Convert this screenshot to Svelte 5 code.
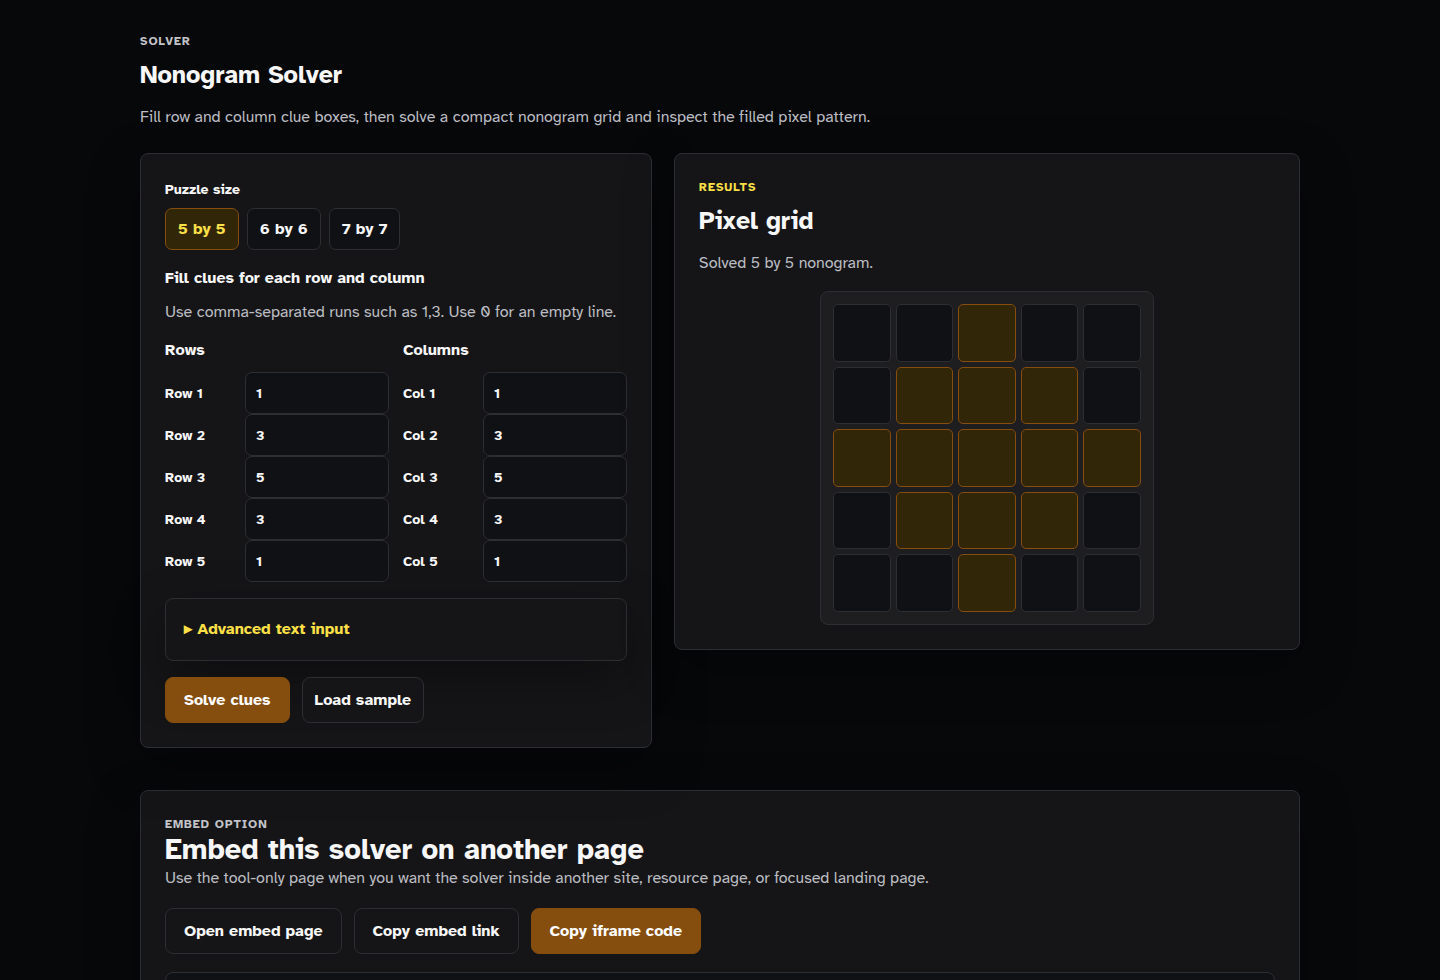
<script>
  const sizes = [5, 6, 7];
  const samples = {
    5: ["1", "3", "5", "3", "1"],
    6: ["2", "4", "6", "6", "4", "2"],
    7: ["1", "3", "5", "7", "5", "3", "1"],
  };
  const embedUrl = "/embed/nonogram-solver";
  const iframeCode = `<iframe src="${embedUrl}" title="Nonogram Solver" width="100%" height="720"></iframe>`;

  let size = 5;
  let rows = [...samples[5]];
  let cols = [...samples[5]];
  let grid = [];
  let message = "";

  function parseClue(text) {
    return text
      .split(",")
      .map((part) => parseInt(part, 10))
      .filter((n) => n > 0);
  }

  function runsOf(line) {
    return line
      .join("")
      .split("0")
      .filter(Boolean)
      .map((run) => run.length)
      .join(",");
  }

  function linesFor(clue) {
    const lines = [];
    for (let mask = 0; mask < 2 ** size; mask++) {
      const line = Array.from({ length: size }, (_, i) => (mask >> i) & 1);
      if (runsOf(line) === clue) lines.push(line);
    }
    return lines;
  }

  function search(options, colLines, picked) {
    const y = picked.length;
    if (y === size) return picked;
    for (const line of options[y]) {
      const left = colLines.map((col, x) => col.filter((c) => c[y] === line[x]));
      if (left.some((col) => col.length === 0)) continue;
      const found = search(options, left, [...picked, line]);
      if (found) return found;
    }
    return null;
  }

  function solve() {
    const rowLines = rows.map((r) => linesFor(parseClue(r).join(",")));
    const colLines = cols.map((c) => linesFor(parseClue(c).join(",")));
    const found = search(rowLines, colLines, []);
    grid = found || Array.from({ length: size }, () => Array(size).fill(0));
    message = found
      ? `Solved ${size} by ${size} nonogram.`
      : "No solution matches these clues.";
  }

  function loadSample() {
    rows = [...samples[size]];
    cols = [...samples[size]];
    solve();
  }

  function setSize(n) {
    size = n;
    loadSample();
  }

  function copy(text) {
    navigator.clipboard?.writeText(text);
  }

  solve();
</script>

<main>
  <header>
    <p class="eyebrow">Solver</p>
    <h1>Nonogram Solver</h1>
    <p class="muted">
      Fill row and column clue boxes, then solve a compact nonogram grid and inspect the filled pixel pattern.
    </p>
  </header>

  <div class="workspace">
    <section class="card">
      <h2 class="label" id="size-label">Puzzle size</h2>
      <div class="sizes" role="group" aria-labelledby="size-label">
        {#each sizes as n}
          <button class="size" class:active={n === size} on:click={() => setSize(n)}>{n} by {n}</button>
        {/each}
      </div>

      <h3>Fill clues for each row and column</h3>
      <p class="muted hint">Use comma-separated runs such as 1,3. Use 0 for an empty line.</p>

      <div class="clues">
        <div>
          <h3>Rows</h3>
          {#each rows as _, i}
            <div class="clue">
              <label for="row-{i}">Row {i + 1}</label>
              <input id="row-{i}" type="text" bind:value={rows[i]} />
            </div>
          {/each}
        </div>
        <div>
          <h3>Columns</h3>
          {#each cols as _, i}
            <div class="clue">
              <label for="col-{i}">Col {i + 1}</label>
              <input id="col-{i}" type="text" bind:value={cols[i]} />
            </div>
          {/each}
        </div>
      </div>

      <details>
        <summary>Advanced text input</summary>
        <p class="muted">Rows: {rows.join(" / ")}</p>
        <p class="muted">Columns: {cols.join(" / ")}</p>
      </details>

      <div class="actions">
        <button class="btn primary" on:click={solve}>Solve clues</button>
        <button class="btn compact" on:click={loadSample}>Load sample</button>
      </div>
    </section>

    <section class="card">
      <p class="eyebrow accent">Results</p>
      <h2 class="title">Pixel grid</h2>
      <p class="muted" aria-live="polite">{message}</p>
      <div class="board" style="--size: {size}">
        {#each grid as line}
          {#each line as cell}
            <span class="cell" class:filled={cell}></span>
          {/each}
        {/each}
      </div>
    </section>
  </div>

  <section class="card embed">
    <p class="eyebrow">Embed option</p>
    <h2>Embed this solver on another page</h2>
    <p class="muted">
      Use the tool-only page when you want the solver inside another site, resource page, or focused landing page.
    </p>
    <div class="actions">
      <a class="btn" href={embedUrl}>Open embed page</a>
      <button class="btn" on:click={() => copy(embedUrl)}>Copy embed link</button>
      <button class="btn primary" on:click={() => copy(iframeCode)}>Copy iframe code</button>
    </div>
    <textarea readonly rows="4" aria-label="Iframe code" value={iframeCode}></textarea>
  </section>
</main>

<style>
  :global(body) {
    background: #07080a;
  }

  main {
    max-width: 1160px;
    margin: 0 auto;
    padding: 32px 24px;
    color: #f7f7f8;
    font-family: "Atkinson Hyperlegible", Inter, sans-serif;
    font-size: 16px;
    line-height: 24px;
  }

  h1,
  h2,
  h3,
  p {
    margin: 0;
  }

  h1,
  .title {
    margin: 8px 0 14px;
    font-size: 25px;
    line-height: 33px;
    font-weight: 700;
  }

  h3 {
    font-size: 16px;
    font-weight: 700;
  }

  .eyebrow {
    color: #c2c3c8;
    font-size: 12px;
    line-height: 18px;
    font-weight: 700;
    letter-spacing: 1px;
    text-transform: uppercase;
  }

  .accent {
    color: #fde047;
  }

  .muted {
    color: #bcbdc2;
  }

  .workspace {
    display: grid;
    grid-template-columns: 9fr 11fr;
    align-items: start;
    gap: 22px;
    margin: 24px 0 42px;
  }

  .card,
  details {
    border: 1px solid #2d2e32;
    border-radius: 8px;
    background: #151517;
    box-shadow: 0 18px 50px rgba(0, 0, 0, 0.35);
  }

  .card {
    padding: 24px;
  }

  .label {
    font-size: 14px;
    line-height: 24px;
    font-weight: 700;
  }

  button,
  input,
  textarea {
    font: inherit;
    color: inherit;
  }

  button {
    cursor: pointer;
  }

  .sizes {
    display: flex;
    flex-wrap: wrap;
    gap: 8px;
    margin: 6px 0 16px;
  }

  .size {
    height: 42px;
    padding: 0 12px;
    border: 1px solid #2d2e32;
    border-radius: 7px;
    background: #101115;
    font-weight: 700;
  }

  .size.active {
    border-color: #854d0e;
    background: #312608;
    color: #fde047;
  }

  .hint {
    margin: 10px 0 14px;
  }

  .clues {
    display: grid;
    grid-template-columns: 1fr 1fr;
    gap: 14px;
  }

  .clues h3 {
    margin-bottom: 10px;
  }

  .clue {
    display: grid;
    grid-template-columns: 72px 1fr;
    align-items: center;
    gap: 8px;
    font-size: 14px;
    line-height: 25px;
    font-weight: 700;
  }

  .clue input {
    box-sizing: border-box;
    width: 100%;
    height: 42px;
    padding: 0 10px;
    border: 1px solid #2d2e32;
    border-radius: 7px;
    background: #101115;
  }

  details {
    margin: 16px 0;
    padding: 18px;
  }

  summary {
    color: #fde047;
    line-height: 25px;
    font-weight: 700;
    list-style-type: "▸ ";
    cursor: pointer;
  }

  details[open] summary {
    list-style-type: "▾ ";
  }

  .actions {
    display: flex;
    flex-wrap: wrap;
    gap: 12px;
  }

  .btn {
    box-sizing: border-box;
    display: inline-flex;
    align-items: center;
    height: 46px;
    padding: 0 18px;
    border: 1px solid #2d2e32;
    border-radius: 8px;
    background: #151517;
    color: #f7f7f8;
    font-weight: 700;
    text-decoration: none;
  }

  .btn.compact {
    padding: 0 12px;
  }

  .btn.primary {
    border-color: #854d0e;
    background: #854d0e;
    color: #fff;
  }

  .board {
    box-sizing: border-box;
    display: grid;
    grid-template-columns: repeat(var(--size), 1fr);
    gap: 5px;
    max-width: 334px;
    margin: 16px auto 0;
    padding: 12px;
    border: 1px solid #2d2e32;
    border-radius: 8px;
    background: #1e1e20;
  }

  .cell {
    box-sizing: border-box;
    aspect-ratio: 1;
    border: 1px solid #2d2e32;
    border-radius: 5px;
    background: #101115;
  }

  .cell.filled {
    border-color: #854d0e;
    background: #312608;
  }

  .embed h2 {
    font-size: 29px;
    line-height: 33px;
    font-weight: 700;
  }

  .embed .actions {
    margin: 18px 0;
  }

  textarea {
    box-sizing: border-box;
    display: block;
    width: 100%;
    padding: 12px;
    border: 1px solid #2d2e32;
    border-radius: 8px;
    background: #101115;
    resize: vertical;
  }

  @media (max-width: 860px) {
    .workspace {
      grid-template-columns: 1fr;
    }
  }
</style>
